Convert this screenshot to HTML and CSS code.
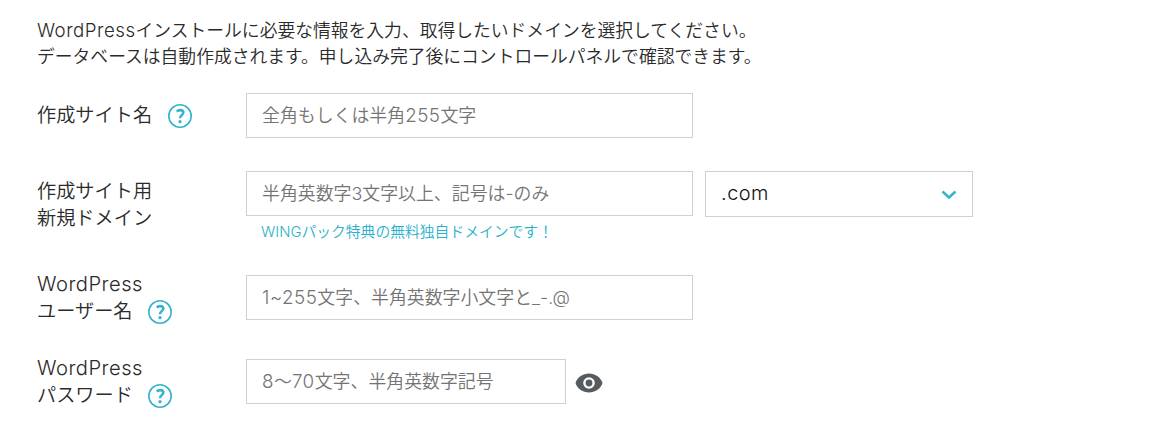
FILE: index.html
```
<!DOCTYPE html>
<html lang="ja">
<head>
  <meta charset="UTF-8">
  <meta name="viewport" content="width=device-width, initial-scale=1">
  <title>WordPressインストール</title>
  <link rel="stylesheet" href="styles.css">
</head>
<body>
  <form class="install">
    <p class="lead">
      <span class="line"><span class="en">WordPress</span>インストールに必要な情報を入力、取得したいドメインを選択してください。</span>
      <span class="line">データベースは自動作成されます。申し込み完了後にコントロールパネルで確認できます。</span>
    </p>

    <div class="row row-site">
      <div class="label">作成サイト名
        <svg class="help" viewBox="0 0 26 26"><circle cx="13" cy="13" r="11.200"/><path d="M9.700 8.500c1.100-1 2.100-1.400 3.500-1.400 1.900 0 3.100 1 3.100 2.500 0 2.400-3.300 2.700-3.300 5.600"/><circle class="dot" cx="13" cy="18.700" r="1.600"/></svg>
      </div>
      <div class="field"><div class="input">全角もしくは半角<span class="en">255</span>文字</div></div>
    </div>

    <div class="row row-domain">
      <div class="label">作成サイト用<br>新規ドメイン</div>
      <div class="field">
        <div class="input">半角英数字3文字以上、記号は-のみ</div>
        <p class="note">WINGパック特典の無料独自ドメインです！</p>
      </div>
      <div class="select"><span class="en">.com</span>
        <svg class="arrow" viewBox="0 0 16 10"><path d="M1.500 1.500l6.500 6 6.500-6"/></svg>
      </div>
    </div>

    <div class="row row-user">
      <div class="label"><span class="en">WordPress</span><br>ユーザー名
        <svg class="help" viewBox="0 0 26 26"><circle cx="13" cy="13" r="11.200"/><path d="M9.700 8.500c1.100-1 2.100-1.400 3.500-1.400 1.900 0 3.100 1 3.100 2.500 0 2.400-3.300 2.700-3.300 5.600"/><circle class="dot" cx="13" cy="18.700" r="1.600"/></svg>
      </div>
      <div class="field"><div class="input"><span class="en">1~255</span>文字、半角英数字小文字と_-.@</div></div>
    </div>

    <div class="row row-pass">
      <div class="label"><span class="en">WordPress</span><br>パスワード
        <svg class="help" viewBox="0 0 26 26"><circle cx="13" cy="13" r="11.200"/><path d="M9.700 8.500c1.100-1 2.100-1.400 3.500-1.400 1.900 0 3.100 1 3.100 2.500 0 2.400-3.300 2.700-3.300 5.600"/><circle class="dot" cx="13" cy="18.700" r="1.600"/></svg>
      </div>
      <div class="field short"><div class="input"><span class="en">8</span>〜<span class="en">70</span>文字、半角英数字記号</div></div>
      <svg class="eye" viewBox="0 0 28 20"><path fill-rule="evenodd" d="M14 .5C8 .5 2.500 4 .5 10c2 6 7.500 9.500 13.500 9.500S25.500 16 27.500 10C25.500 4 20 .5 14 .5zM14 15.800a5.800 5.800 0 1 1 0-11.600 5.800 5.800 0 0 1 0 11.600zM14 6.600a3.400 3.400 0 1 0 0 6.800 3.400 3.400 0 0 0 0-6.800z"/></svg>
    </div>
  </form>
</body>
</html>
```
FILE: styles.css
```
body {
  margin: 0;
  background: #fff;
  color: #2a2a2a;
  font-family: Inter, "Noto Sans CJK JP", sans-serif;
  font-weight: 350;
}

p {
  margin: 0;
}

.install {
  padding: 18px 37px 23px;
}

.lead {
  font-size: 17.8px;
  line-height: 26px;
}

.line {
  display: block;
  white-space: nowrap;
}

.en {
  font-size: 1.05em;
  font-weight: 300;
  line-height: 1;
  letter-spacing: 0.5px;
}

.row {
  display: flex;
  align-items: flex-start;
}

.row-site {
  height: 45px;
  margin-top: 23px;
}

.row-domain {
  height: 71px;
  margin-top: 33px;
}

.row-user {
  height: 45px;
  margin-top: 33px;
}

.row-pass {
  height: 45px;
  margin-top: 39px;
}

.label {
  width: 209px;
  font-size: 19.2px;
  line-height: 27px;
  white-space: nowrap;
}

.row-site .label {
  padding-top: 9px;
}

.row-domain .label {
  padding-top: 7px;
}

.row-user .label,
.row-pass .label {
  margin-top: -4px;
}

.field {
  width: 447px;
}

.field.short {
  width: 320px;
}

.input,
.select {
  box-sizing: border-box;
  height: 45px;
  padding: 0 15px;
  border: 1px solid #d0d0d0;
  font-size: 17.9px;
  line-height: 43px;
  white-space: nowrap;
}

.input {
  color: #747474;
}

.note {
  padding-left: 15px;
  color: #29b1c9;
  font-size: 14.8px;
  line-height: 32px;
}

.select {
  display: flex;
  align-items: center;
  justify-content: space-between;
  width: 268px;
  height: 46px;
  margin-left: 12px;
  color: #111;
  font-size: 19px;
}

.help {
  width: 26px;
  height: 26px;
  margin: -3px 0 -3px 9px;
  vertical-align: -4px;
  fill: none;
  stroke: #35b3cc;
  stroke-width: 1.6;
}

.help path {
  stroke-width: 2.6;
}

.help .dot {
  fill: #35b3cc;
  stroke: none;
}

.arrow {
  width: 16px;
  height: 10px;
  margin-top: 2px;
  fill: none;
  stroke: #35b3cc;
  stroke-width: 2.5;
}

.eye {
  width: 28px;
  height: 20px;
  margin: 14px 0 0 9px;
  fill: #555b5e;
}
```
